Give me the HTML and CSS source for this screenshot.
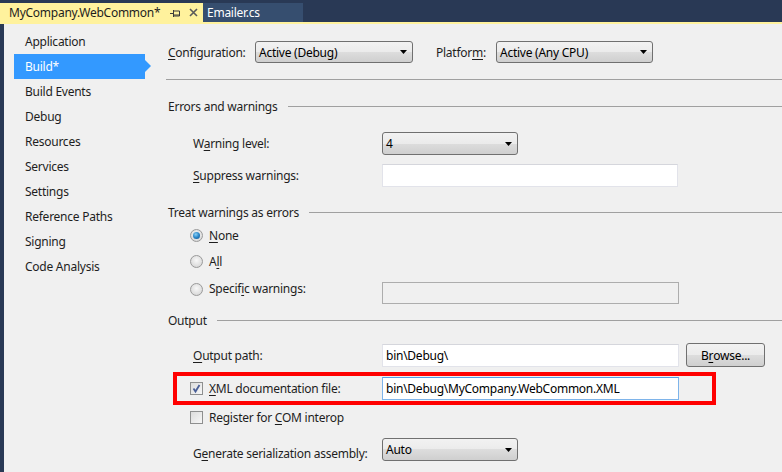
FILE: index.html
```html
<!DOCTYPE html>
<html>
<head>
<meta charset="utf-8">
<link rel="stylesheet" href="styles.css">
</head>
<body>
<div class="tabs">
  <div class="tab active">
    <span class="tab-title">MyCompany.WebCommon*</span>
    <svg class="pin" width="10" height="8" viewBox="0 0 10 8"><path d="M0 4.5H3M3.5 1V8M3.5 2H9.5V7H3.5M3.5 6H9.5" stroke="#3b3b3b" fill="none" stroke-width="1"/></svg>
    <svg class="close" width="9" height="9" viewBox="0 0 9 9"><path d="M1 1L8 8M8 1L1 8" stroke="#5a5a5a" stroke-width="1.6"/></svg>
  </div>
  <div class="tab">Emailer.cs</div>
</div>
<div class="tabline"></div>
<div class="frame">
  <nav class="nav">
    <div class="nav-item">Application</div>
    <div class="nav-item selected">Build*</div>
    <div class="nav-item">Build Events</div>
    <div class="nav-item">Debug</div>
    <div class="nav-item">Resources</div>
    <div class="nav-item">Services</div>
    <div class="nav-item">Settings</div>
    <div class="nav-item">Reference Paths</div>
    <div class="nav-item">Signing</div>
    <div class="nav-item">Code Analysis</div>
  </nav>
  <main class="main">
    <div class="config-row">
      <span class="cfg-lbl"><u>C</u>onfiguration:</span>
      <div class="select w158"><span>Active (Debug)</span><svg width="7" height="4" viewBox="0 0 7 4"><path d="M0 0H7L3.5 4Z" fill="#000"/></svg></div>
      <span class="plat-lbl">Platfor<u>m</u>:</span>
      <div class="select w157"><span>Active (Any CPU)</span><svg width="7" height="4" viewBox="0 0 7 4"><path d="M0 0H7L3.5 4Z" fill="#000"/></svg></div>
    </div>
    <div class="sep"></div>

    <div class="group-title t-errors">Errors and warnings</div>
    <div class="row r-warn">
      <span class="lbl">W<u>a</u>rning level:</span>
      <div class="select w136 h23"><span>4</span><svg width="7" height="4" viewBox="0 0 7 4"><path d="M0 0H7L3.5 4Z" fill="#000"/></svg></div>
    </div>
    <div class="row r-supp">
      <span class="lbl"><u>S</u>uppress warnings:</span>
      <div class="textbox w296"></div>
    </div>

    <div class="group-title t-treat">Treat warnings as errors</div>
    <div class="opt r-none"><span class="radio checked"></span><span><u>N</u>one</span></div>
    <div class="opt r-all"><span class="radio"></span><span>A<u>l</u>l</span></div>
    <div class="opt r-spec">
      <span class="radio"></span><span class="opt-lbl">Specif<u>i</u>c warnings:</span>
      <div class="textbox disabled w297"></div>
    </div>

    <div class="group-title t-output">Output</div>
    <div class="row r-outpath">
      <span class="lbl"><u>O</u>utput path:</span>
      <div class="textbox w297"><span>bin\Debug\</span></div>
      <div class="button">B<u>r</u>owse...</div>
    </div>
    <div class="highlight">
      <span class="check checked"><svg width="11" height="11" viewBox="0 0 11 11"><path d="M2.5 5.5L4.5 8.5L8.5 2" stroke="#4a5f97" stroke-width="1.8" fill="none"/></svg></span>
      <span class="hl-lbl"><u>X</u>ML documentation file:</span>
      <div class="textbox focus w297"><span>bin\Debug\MyCompany.WebCommon.XML</span></div>
    </div>
    <div class="opt r-com"><span class="check"></span><span>Register for <u>C</u>OM interop</span></div>
    <div class="row r-gen">
      <span class="lbl gen-lbl">G<u>e</u>nerate serialization assembly:</span>
      <div class="select w136 h23"><span>Auto</span><svg width="7" height="4" viewBox="0 0 7 4"><path d="M0 0H7L3.5 4Z" fill="#000"/></svg></div>
    </div>
  </main>
</div>
</body>
</html>
```
FILE: styles.css
```css
* { box-sizing: border-box; }
html, body { margin: 0; padding: 0; }
body {
  width: 782px;
  height: 472px;
  overflow: hidden;
  background: #293955;
  font-family: "Noto Sans", "Open Sans", sans-serif;
  font-size: 12px;
  letter-spacing: -0.25px;
  color: #1e1e1e;
}
u { text-decoration: underline; text-underline-offset: 2px; text-decoration-thickness: 1px; }

.tabs { display: flex; height: 22px; padding-top: 3px; }
.tab {
  height: 19px;
  display: flex;
  align-items: center;
  background: #364e6f;
  color: #fff;
  width: 100px;
  padding-left: 4px;
}
.tab.active { background: #fff29d; color: #1e1e1e; width: 203px; padding-left: 9px; }
.tab-title { width: 160px; white-space: nowrap; }
.pin { margin-left: 1px; }
.close { margin-left: 9px; }
.tabline { height: 2px; background: #fff29d; }

.frame { display: flex; height: 448px; margin-left: 4px; background: #f0f0f0; }
.nav { width: 162px; padding: 5px 0 0 10px; }
.nav-item {
  position: relative;
  width: 131px;
  height: 25px;
  line-height: 25px;
  padding-left: 11px;
  white-space: nowrap;
}
.nav-item.selected { background: #3399ff; color: #fff; }
.nav-item.selected::after {
  content: "";
  position: absolute;
  right: -6px;
  top: 6px;
  border-style: solid;
  border-width: 6px 0 6px 6px;
  border-color: transparent transparent transparent #3399ff;
}

.main { flex: 1; }
.config-row { display: flex; align-items: center; height: 22px; margin-top: 17px; padding-left: 2px; }
.cfg-lbl { width: 87px; }
.plat-lbl { width: 60px; margin-left: 23px; }

.select {
  display: flex;
  align-items: center;
  justify-content: space-between;
  height: 22px;
  padding: 0 5px 0 3px;
  border: 1px solid #707070;
  border-radius: 3px;
  background: linear-gradient(#f2f2f2, #ebebeb 50%, #dddddd 50%, #cfcfcf);
  color: #000;
}
.h23 { height: 23px; }
.w158 { width: 158px; }
.w157 { width: 157px; }
.w136 { width: 136px; }
.w296 { width: 296px; }
.w297 { width: 297px; }

.sep { height: 1px; background: #a0a0a0; margin-top: 16px; }

.group-title {
  display: flex;
  align-items: center;
  height: 16px;
  padding-left: 2px;
  gap: 10px;
  white-space: nowrap;
}
.group-title::after { content: ""; flex: 1; height: 1px; background: #a0a0a0; }
.t-errors { margin-top: 18px; }
.t-treat { margin-top: 17px; }
.t-output { margin-top: 8px; }

.row { display: flex; align-items: center; padding-left: 27px; }
.lbl { width: 189px; white-space: nowrap; }
.r-warn { margin-top: 18px; height: 23px; }
.r-supp { margin-top: 9px; height: 23px; }
.r-outpath { margin-top: 15px; height: 24px; }
.r-gen { margin-top: 11px; height: 23px; align-items: flex-start; }
.gen-lbl { margin-top: 7px; }

.textbox {
  height: 23px;
  background: #fff;
  border: 1px solid #e2e3ea;
  border-top-color: #d5d6dc;
  padding-left: 3px;
  display: flex;
  align-items: center;
  color: #000;
}
.textbox.disabled { background: #f0f0f0; border-color: #adadad; height: 22px; margin-top: 1px; }
.textbox.focus { border-color: #7eb4ea; border-top-color: #569de5; }

.button {
  margin-left: 7px;
  width: 79px;
  height: 24px;
  border: 1px solid #707070;
  border-radius: 3px;
  background: linear-gradient(#f2f2f2, #ebebeb 50%, #dddddd 50%, #cfcfcf);
  display: flex;
  align-items: center;
  justify-content: center;
  color: #000;
}

.opt { display: flex; align-items: center; padding-left: 24px; gap: 6px; height: 20px; }
.r-none { margin-top: 5px; }
.r-all { margin-top: 6px; }
.r-spec { margin-top: 10px; height: 23px; align-items: flex-start; }
.r-spec .radio { margin-top: 2px; }
.opt-lbl { width: 167px; line-height: 16px; }
.r-com { margin-top: 2px; }

.radio {
  width: 13px;
  height: 13px;
  border-radius: 50%;
  border: 1px solid #9a9a9a;
  background: radial-gradient(circle at 50% 40%, #f8f8f8, #dcdcdc 70%, #cfcfcf);
  display: flex;
  align-items: center;
  justify-content: center;
  flex: none;
}
.radio.checked::after {
  content: "";
  width: 7px;
  height: 7px;
  border-radius: 50%;
  background: radial-gradient(circle at 40% 35%, #8ad0f5, #2a86c8 50%, #0f4d87);
}

.check {
  width: 13px;
  height: 13px;
  border: 1px solid #8e8f8f;
  background: linear-gradient(135deg, #dcdcdc, #f7f7f7);
  display: flex;
  align-items: center;
  justify-content: center;
  flex: none;
}

.highlight {
  display: flex;
  align-items: center;
  margin-top: 5px;
  margin-left: 7px;
  width: 543px;
  height: 33px;
  border: 4px solid #ff0000;
  padding-left: 13px;
}
.hl-lbl { width: 179px; padding-left: 6px; white-space: nowrap; }
```
